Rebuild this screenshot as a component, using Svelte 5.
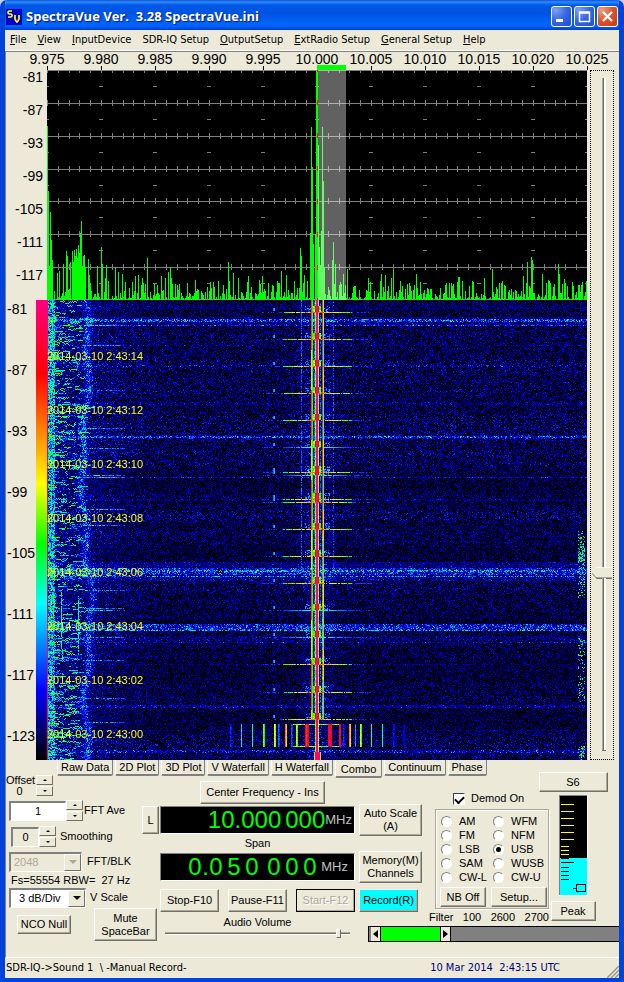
<script lang="ts">
  import { onMount } from "svelte";

  const menu = [
    ["F", "ile"],
    ["V", "iew"],
    ["I", "nputDevice"],
    ["", "SDR-IQ Setup"],
    ["O", "utputSetup"],
    ["E", "xtRadio Setup"],
    ["G", "eneral Setup"],
    ["H", "elp"],
  ];
  const frequencies = ["9.975", "9.980", "9.985", "9.990", "9.995", "10.000", "10.005", "10.010", "10.015", "10.020", "10.025"];
  const spectrumLevels = [-81, -87, -93, -99, -105, -111, -117];
  const waterfallLevels = [-81, -87, -93, -99, -105, -111, -117, -123];
  const stamps = ["14", "12", "10", "08", "06", "04", "02", "00"];
  const tabs = ["Raw Data", "2D Plot", "3D Plot", "V Waterfall", "H Waterfall", "Combo", "Continuum", "Phase"];
  const modes = ["AM", "WFM", "FM", "NFM", "LSB", "USB", "SAM", "WUSB", "CW-L", "CW-U"];

  let activeTab = $state("Combo");
  let mode = $state("USB");
  let demod = $state(true);
  let average = $state(1);
  let smoothing = $state(0);
  let offset = $state(0);
  let volume = $state(95);
  let level = $state(74);
  let canvas: HTMLCanvasElement;

  // Small seeded generator so the noise looks the same on every load
  function makeRandom(seed: number) {
    return () => {
      seed = (seed * 1664525 + 1013904223) >>> 0;
      return seed / 4294967296;
    };
  }

  // Signal peaks: [bin, height above the noise floor]
  const peaks = [
    [0, 174], [1, 109], [2, 34], [3, 88], [4, 60], [5, 40], [10, 27], [12, 29], [16, 36], [19, 49], [20, 44], [23, 38],
    [25, 49], [26, 38], [27, 50], [28, 44], [29, 51], [30, 42], [31, 55], [32, 47], [33, 67], [34, 79], [35, 34], [36, 44],
    [37, 45], [38, 33], [41, 41], [42, 25], [50, 34], [54, 53], [55, 36], [58, 22], [59, 35], [68, 33], [71, 28], [75, 26],
    [88, 24], [91, 25], [95, 22], [100, 42], [107, 16], [114, 24], [118, 22], [121, 28], [123, 33], [124, 22], [132, 16],
    [140, 17], [148, 20], [181, 38], [186, 27], [191, 22], [201, 24], [212, 20], [215, 24], [234, 29], [239, 25],
    [253, 52], [254, 44], [257, 25], [263, 67], [264, 173], [265, 133], [266, 56], [268, 66], [269, 230], [270, 230],
    [271, 155], [272, 53], [273, 35], [274, 69], [275, 173], [276, 119], [277, 33], [285, 40], [286, 58], [288, 36],
    [296, 26], [300, 31], [321, 22], [334, 26], [338, 25], [344, 22], [346, 30], [353, 19], [369, 26], [402, 17],
    [411, 23], [412, 23], [415, 19], [426, 18], [437, 22], [445, 31], [455, 19], [476, 24], [480, 38], [484, 43],
    [485, 40], [495, 26], [501, 20], [511, 36], [512, 26], [517, 21], [534, 15],
  ];

  function spectrumPath() {
    const random = makeRandom(11);
    const heights = Array.from({ length: 540 }, () => Math.round(random() ** 2.2 * 19));
    for (const [bin, height] of peaks) heights[bin] = height;
    return heights.map((h, i) => (h > 0 ? `M${i} ${230 - h}h1V230h-1z` : "")).join("");
  }

  function gridPath() {
    let d = "";
    for (let row = 0; row <= 7; row++) {
      const y = Math.round(row * 32.85);
      d += `M0 ${Math.min(y, 229)}h540v1h-540z`;
      for (let i = 0; i <= 50; i++) {
        d += `M${Math.round(i * 10.8)} ${y - 3}h1v6h-1z`;
      }
      for (let i = 0; i <= 10; i++) {
        d += `M${i * 54 - 2} ${y + 16}h4v1h-4z`;
      }
    }
    return d;
  }

  const palette = [
    [0, 0, 0, 0],
    [0.18, 0, 0, 255],
    [0.34, 0, 255, 255],
    [0.47, 0, 255, 0],
    [0.6, 255, 255, 0],
    [0.84, 255, 0, 0],
    [1, 255, 0, 128],
  ];

  function colour(value: number) {
    const v = Math.max(0, Math.min(1, value));
    let i = 1;
    while (i < palette.length - 1 && v > palette[i][0]) i++;
    const a = palette[i - 1];
    const b = palette[i];
    const t = (v - a[0]) / (b[0] - a[0]);
    return [1, 2, 3].map((c) => a[c] + (b[c] - a[c]) * t);
  }

  // Horizontal noise bursts: [first row, last row, strength]
  const bursts = [
    [4, 9, 0.05], [17, 24, 0.08], [19, 21, 0.2], [25, 25, 0.22], [45, 45, 0.09], [65, 66, 0.08], [102, 104, 0.06],
    [135, 138, 0.08], [136, 137, 0.16], [177, 177, 0.18], [199, 200, 0.08], [235, 236, 0.04], [262, 280, 0.1],
    [268, 274, 0.14], [270, 271, 0.14], [276, 276, 0.24], [324, 330, 0.24], [330, 330, 0.14], [336, 340, 0.06],
    [342, 342, 0.12], [364, 364, 0.08], [405, 407, 0.14], [430, 430, 0.06], [450, 452, 0.14],
  ];
  const ticks = [12, 39, 66, 93, 120, 147, 172, 175, 199, 202, 229, 256, 283, 310, 337, 364, 392, 419];
  const harmonics = [
    [183, 0.23], [194, 0.34], [205, 0.42], [216, 0.56], [227, 0.64], [231, 0.27], [238, 0.76], [244, 0.26], [249, 0.6],
    [258, 0.9], [260, 0.96], [281, 0.96], [283, 0.98], [292, 0.96], [296, 0.24], [302, 0.74], [308, 0.3], [313, 0.6],
    [324, 0.42], [335, 0.4], [346, 0.22], [356, 0.18],
  ];

  function drawWaterfall() {
    const width = 540;
    const height = 460;
    const random = makeRandom(77);
    const field = new Float32Array(width * height);
    const raise = (x: number, y: number, v: number) => {
      if (x < 0 || y < 0 || x >= width || y >= height) return;
      field[y * width + x] = Math.max(field[y * width + x], v);
    };

    let drift = 0.17;
    for (let y = 0; y < height; y++) {
      drift = Math.max(0.14, Math.min(0.22, drift + (random() - 0.5) * 0.04));
      const gain = bursts.reduce((sum, [from, to, s]) => (y >= from && y <= to ? sum + s : sum), 0);
      const ridge = 38 + 3 * Math.sin(y / 37) + 2 * Math.sin(y / 11) + (y > 270 ? 3 : 0);
      for (let x = 0; x < width; x++) {
        let v = random() ** 2.6 * drift + gain * random();
        if (x < 110) v += random() ** 2 * 0.13 * (1 - x / 110);
        v += random() * 0.24 * Math.exp(-(((x - ridge) / 4) ** 2));
        if (x < 8) v += random() * 0.34;
        const near = Math.abs(x - 270);
        if (near < 22) v += random() * 0.1 * (1 - near / 22);
        field[y * width + x] = v;
      }
    }

    // Broken streaks of interference on the low side
    for (let n = 0; n < 760; n++) {
      const y = Math.floor(random() * height);
      const x = Math.floor(random() ** 1.4 * 34);
      const length = 2 + Math.floor(random() ** 2 * 11);
      const strength = 0.2 + random() * 0.28;
      for (let i = 0; i < length; i++) raise(x + i, y + (random() < 0.25 ? 1 : 0), strength + (random() - 0.5) * 0.18);
    }
    for (const y of [25, 45, 90, 107, 128, 148, 175, 177, 209, 225, 290, 308, 310, 337, 360, 398, 422]) {
      for (let x = 36; x < 78; x++) if (random() < 0.75) raise(x, y, 0.2 + random() * 0.22 * (1 - (x - 36) / 60));
    }
    for (const [x, from, to] of [[5, 0, 40], [14, 292, 350], [15, 350, 362], [31, 295, 355], [4, 180, 220], [6, 290, 320]]) {
      for (let y = from; y < to; y++) if (random() < 0.8) raise(x, y, 0.3 + random() * 0.14);
    }

    // Noise patches on the high side
    for (const [from, to, density] of [[230, 298, 0.22], [246, 262, 0.35], [338, 402, 0.2], [446, 460, 0.35]]) {
      for (let y = from; y < to; y++) {
        for (let x = 531; x < 538; x++) if (random() < density) raise(x, y, 0.22 + random() * 0.3);
      }
    }

    for (let y = 0; y < 420; y++) {
      if (y < 270 && random() < 0.7) raise(254, y, 0.2 + random() * 0.08);
      if (y < 270 && random() < 0.6) raise(286, y, 0.19 + random() * 0.09);
      raise(264, y, y % 90 < 50 ? 0.78 : 0.64);
      raise(265, y, 0.46 + random() * 0.06);
      raise(275, y, y > 230 ? 0.66 + random() * 0.12 : 0.8);
      raise(276, y, y % 70 < 30 ? 0.56 : 0.36);
      raise(267, y, 0.16 + random() * 0.14);
      raise(273, y, 0.14 + random() * 0.14);
    }
    for (let y = 0; y < height; y++) {
      raise(268, y, 0.46 + random() * 0.14);
      for (const x of [269, 270]) raise(x, y, 1);
      raise(271, y, 0.5 + random() * 0.14);
    }

    for (const y of ticks) {
      const weak = y === 175 || y === 147 || y === 310 || y === 337;
      for (let x = 236; x < 305; x++) {
        const d = Math.abs(x - 270) / 34;
        if (random() < 0.88) raise(x, y, weak ? 0.4 - d * 0.2 : 0.7 - d * 0.3 + random() * 0.12);
      }
      for (let x = 215; x < 325; x++) if (random() < 0.4) raise(x, y, 0.22);
      for (let dy = -6; dy < 0; dy++) {
        for (let x = 266; x < 274; x++) raise(x, y + dy, x > 267 && x < 272 ? 0.84 : 0.4 + random() * 0.2);
        for (let x = 258; x < 283; x++) if (random() < 0.35) raise(x, y + dy, 0.2 + random() * 0.12);
      }
      for (let dy = -4; dy < -1; dy++) {
        raise(226, y + dy, 0.26);
        raise(227, y + dy, 0.3);
      }
    }

    for (let y = 424; y < 447; y++) {
      for (const [x, v] of harmonics) {
        raise(x, y, v - random() * 0.06);
        if (v > 0.5 || v < 0.3) raise(x + 1, y, v * 0.9 - random() * 0.06);
      }
    }
    for (let x = 246; x < 294; x++) {
      raise(x, 424, 0.4 + random() * 0.24);
      raise(x, 446, 0.4 + random() * 0.24);
    }
    for (let y = 452; y < height; y++) {
      for (let x = 267; x < 274; x++) raise(x, y, x === 267 || x === 273 ? 0.55 : 0.98);
    }
    for (let y = 0; y < height; y++) raise(0, y, 0.98);

    const context = canvas.getContext("2d")!;
    const image = context.createImageData(width, height);
    field.forEach((v, i) => {
      const [r, g, b] = colour(v);
      image.data.set([r, g, b, 255], i * 4);
    });
    context.putImageData(image, 0, 0);
  }

  onMount(drawWaterfall);
</script>

{#snippet spinner(label: string, step: (by: number) => void)}
  <span class="spinner">
    <button aria-label="Increase {label}" onclick={() => step(1)}><i class="up"></i></button>
    <button aria-label="Decrease {label}" onclick={() => step(-1)}><i class="down"></i></button>
  </span>
{/snippet}

<div class="window">
  <header class="titlebar">
    <svg class="logo" viewBox="0 0 16 16" aria-hidden="true">
      <rect width="16" height="16" fill="#0000c8" />
      <path d="M6 2H3L2 3v1l1 1h2l1 1v1L5 8H2M9 6v4l1 2 1 1 1-1 1-2V6" fill="none" stroke="#ff0" stroke-width="1.7" />
    </svg>
    <h1>SpectraVue Ver. &nbsp;3.28 SpectraVue.ini</h1>
    <button class="caption" aria-label="Minimize">
      <svg viewBox="0 0 19 19"><rect x="4" y="12" width="7" height="3" fill="#fff" /></svg>
    </button>
    <button class="caption" aria-label="Maximize">
      <svg viewBox="0 0 19 19"><path d="M4.500 5.500h10v9h-10zM4 5h11M4 6h11" fill="none" stroke="#fff" stroke-width="1.5" /></svg>
    </button>
    <button class="caption close" aria-label="Close">
      <svg viewBox="0 0 19 19"><path d="M5 5l9 9M14 5l-9 9" stroke="#fff" stroke-width="2.4" /></svg>
    </button>
  </header>

  <nav class="menu">
    {#each menu as [key, rest]}
      <button><u>{key}</u>{rest}</button>
    {/each}
  </nav>

  <main>
    <section class="display">
      <div class="freq-scale">
        {#each frequencies as frequency}
          <span>{frequency}</span>
        {/each}
        <div class="passband"></div>
      </div>

      <div class="spectrum-scale">
        {#each spectrumLevels as value}
          <span>{value}</span>
        {/each}
      </div>
      <svg class="spectrum" viewBox="0 0 540 230" preserveAspectRatio="none" shape-rendering="crispEdges">
        <rect width="540" height="230" fill="#000" />
        <path d={gridPath()} fill="#808080" />
        <path d={spectrumPath()} fill="#0f0" />
        <rect x="271" width="28" height="230" fill="#fff" opacity="0.38" />
        <path d="M270.5 0V230" stroke="#e02000" stroke-dasharray="5 28" stroke-dashoffset="3" />
      </svg>

      <div class="waterfall-scale">
        <div class="levels">
          {#each waterfallLevels as value}
            <span>{value}</span>
          {/each}
        </div>
        <div class="colorbar"></div>
      </div>
      <div class="waterfall">
        <canvas bind:this={canvas} width="540" height="460"></canvas>
        <div class="stamps">
          {#each stamps as seconds}
            <span>2014-03-10 2:43:{seconds}</span>
          {/each}
        </div>
      </div>

      <div class="level">
        <input type="range" min="0" max="100" bind:value={level} aria-label="Display level" />
      </div>
    </section>

    <div class="tabs" role="tablist">
      {#each tabs as tab}
        <button role="tab" aria-selected={activeTab === tab} class:active={activeTab === tab} onclick={() => (activeTab = tab)}>
          {tab}
        </button>
      {/each}
    </div>

    <section class="controls">
      <div class="left">
        <div class="row offset">
          <span class="offset-label">Offset<output>{offset}</output></span>
          {@render spinner("offset", (by) => (offset += by))}
        </div>
        <div class="row average">
          <input id="average" class="well" bind:value={average} />
          {@render spinner("FFT average", (by) => (average += by))}
          <label for="average">FFT Ave</label>
        </div>
        <div class="row smoothing">
          <input id="smoothing" class="well" bind:value={smoothing} />
          {@render spinner("smoothing", (by) => (smoothing += by))}
          <label for="smoothing">Smoothing</label>
        </div>
        <div class="row block">
          <span class="combo disabled">
            <select id="block" disabled><option>2048</option></select>
            <i class="arrow"></i>
          </span>
          <label for="block">FFT/BLK</label>
        </div>
        <p>Fs=55554 RBW= &nbsp;27 Hz</p>
        <div class="row scale">
          <span class="combo">
            <select id="scale"><option>3 dB/Div</option></select>
            <i class="arrow"></i>
          </span>
          <label for="scale">V Scale</label>
        </div>
        <div class="row bottom">
          <button class="btn null">NCO Null</button>
          <button class="btn mute">Mute<br />SpaceBar</button>
        </div>
      </div>

      <div class="tuning">
        <button class="btn center">Center Frequency - Ins</button>
        <div class="lcd-row">
          <button class="btn lock">L</button>
          <div class="lcd">
            <span>10.</span><span>000</span><span class="group">000</span><small>MHz</small>
          </div>
        </div>
        <div class="caption-text">Span</div>
        <div class="lcd wide">
          <b>0</b><b>.</b><b>0</b><b>5</b><b>0</b><b class="group">0</b><b>0</b><b>0</b><small>MHz</small>
        </div>
        <div class="transport">
          <button class="btn">Stop-F10</button>
          <button class="btn">Pause-F11</button>
          <button class="btn start" disabled>Start-F12</button>
        </div>
        <label class="volume">
          Audio Volume
          <input type="range" min="0" max="100" bind:value={volume} />
        </label>
      </div>

      <div class="right">
        <div class="right-top">
          <div class="actions">
            <button class="btn tall">Auto Scale<br />(A)</button>
            <button class="btn tall">Memory(M)<br />Channels</button>
            <button class="btn record">Record(R)</button>
          </div>

          <div class="demod">
            <label class="check"><input type="checkbox" bind:checked={demod} />Demod On</label>
            <div class="modes">
              {#each modes as name}
                <label><input type="radio" name="mode" value={name} bind:group={mode} />{name}</label>
              {/each}
              <div class="mode-buttons">
                <button class="btn">NB Off</button>
                <button class="btn">Setup...</button>
              </div>
            </div>
            <div class="filter-text"><span>Filter</span><span>100</span><span>2600</span><span>2700</span></div>
          </div>

          <div class="meter">
            <button class="btn signal">S6</button>
            <svg viewBox="0 0 29 101" shape-rendering="crispEdges">
              <path d="M0 0h29v101H0z" fill="#808080" />
              <path d="M28 0h1v101H0v-1h28z" fill="#fff" />
              <path d="M1 1h27v62H1z" fill="#000" />
              <path d="M1 63h27v37H1z" fill="#0ff" />
              <path d="M2 9.5h13M2 16.5h13M2 23.5h13M2 30.5h13M2 37.5h13M2 44.5h13M2 51.5h8M2 55.5h8M2 59.5h8" stroke="#ff0" />
              <path d="M2 63.5h8M2 67.5h13M2 72.5h8M2 76.5h8M2 80.5h8M2 84.5h8M17.5 89.5h9v7h-9zM14 93.5h3" stroke="#000" fill="none" />
            </svg>
            <button class="btn peak">Peak</button>
          </div>
        </div>
        <div class="filter-bar">
          <button aria-label="Lower filter edge"><i></i></button>
          <span class="band"></span>
          <button class="upper" aria-label="Upper filter edge"><i></i></button>
        </div>
      </div>
    </section>
  </main>

  <footer>
    <span>SDR-IQ-&gt;Sound 1 &nbsp;\ -Manual Record-</span>
    <time>10 Mar 2014 &nbsp;2:43:15 UTC</time>
    <svg class="grip" viewBox="0 0 12 12"><path d="M0 12L12 0M4 12l8-8M8 12l4-4" stroke="#9a988a" stroke-width="1.5" /></svg>
  </footer>
</div>

<style>
  :global(body) {
    background: #c4d2ee;
  }

  .window {
    box-sizing: border-box;
    display: flex;
    flex-direction: column;
    border: solid #0042dc;
    border-width: 0 5px 4px;
    border-radius: 7px 7px 0 0;
    overflow: hidden;
    background: #ece9d8;
    color: #000;
    font: 11px/13px "Liberation Sans", Arial, sans-serif;
    cursor: default;
  }

  .window :global(*) {
    box-sizing: border-box;
  }

  button,
  input,
  select {
    margin: 0;
    padding: 0;
    border: 0;
    border-radius: 0;
    color: inherit;
    font: inherit;
  }

  .titlebar {
    display: flex;
    align-items: center;
    gap: 2px;
    height: 30px;
    margin: 0 -5px;
    padding: 3px 6px 0;
    background: linear-gradient(#1450d0 0, #2a8cff 2px, #0058e6 5px, #0053e1 14px, #0062fa 22px, #0066ff 26px, #003cd0 30px);
  }

  .logo {
    width: 16px;
    height: 16px;
  }

  h1 {
    flex: 1;
    margin: 0 0 1px 2px;
    color: #fff;
    font: bold 13px/18px "Open Sans", "Noto Sans", sans-serif;
    text-shadow: 1px 1px 1px #0a1883;
    white-space: nowrap;
  }

  .caption {
    width: 21px;
    height: 21px;
    border: 1px solid #fff;
    border-radius: 3px;
    background: radial-gradient(circle at 20% 15%, #7da2f0, #3565e4 50%, #1d4ed6);
  }

  .caption svg {
    display: block;
  }

  .caption.close {
    background: radial-gradient(circle at 20% 15%, #f0a080, #e0502c 50%, #c83a10);
  }

  .menu {
    display: flex;
    gap: 11px;
    height: 21px;
    padding: 0 5px 1px;
    border-bottom: 1px solid #fff;
  }

  .menu button {
    background: none;
    font: 11px/16px "DejaVu Sans Condensed", "DejaVu Sans", sans-serif;
    white-space: nowrap;
  }

  main {
    display: flex;
    flex-direction: column;
    border: solid #808080;
    border-width: 1px 0 0 1px;
    border-bottom: 1px solid #fff;
  }

  .display {
    display: grid;
    grid-template-columns: 41px minmax(0, 1fr) 32px;
    grid-template-rows: 18px 230px 460px;
    font-size: 14px;
    line-height: 14px;
  }

  .freq-scale {
    position: relative;
    grid-column: 2;
    display: flex;
    margin: 0 -27px;
  }

  .freq-scale span {
    flex: 1;
    display: flex;
    flex-direction: column;
    align-items: center;
  }

  .freq-scale span::after {
    content: "";
    width: 1px;
    height: 4px;
    background: #000;
  }

  .passband {
    position: absolute;
    bottom: 0;
    left: 50%;
    width: 29px;
    height: 5px;
    background: #0f0;
  }

  .spectrum-scale {
    grid-column: 1;
    padding-right: 4px;
    text-align: right;
  }

  .spectrum-scale span {
    display: block;
    height: 33px;
  }

  .spectrum {
    display: block;
    width: 100%;
    height: 230px;
  }

  .waterfall-scale {
    grid-column: 1;
    display: flex;
  }

  .levels {
    display: grid;
    grid-template-rows: repeat(7, 2fr) 1fr;
    width: 30px;
    padding: 2px 0 0 1px;
  }

  .colorbar {
    flex: 1;
    background: linear-gradient(#ff0080, #f00 16%, #ff0 40%, #0f0 53%, #0ff 66%, #00f 85%, #000);
  }

  .waterfall {
    position: relative;
  }

  .waterfall canvas {
    display: block;
    width: 100%;
    height: 460px;
  }

  .stamps {
    position: absolute;
    top: 49px;
    left: 0;
    color: #ff0;
    font-size: 11px;
  }

  .stamps span {
    display: block;
    height: 54px;
  }

  .level {
    grid-area: 1 / 3 / 4 / 4;
    margin: 18px 5px 0 3px;
    border: 1px dotted #000;
    padding: 7px 0 9px;
  }

  .level input {
    appearance: none;
    display: block;
    width: 22px;
    height: 100%;
    background: linear-gradient(90deg, transparent 11px, #aca899 11px 12px, #716f64 12px 13px, #fff 13px 15px, transparent 15px);
    filter: drop-shadow(0 1px #716f64);
    writing-mode: vertical-lr;
  }

  .level input::-webkit-slider-thumb {
    appearance: none;
    width: 20px;
    height: 11px;
    background: linear-gradient(#fff 1px, #ece9d8 1px 10px, #aca899 10px);
    clip-path: polygon(0 50%, 5px 0, 100% 0, 100% 100%, 5px 100%);
  }

  .tabs {
    display: flex;
    align-items: flex-start;
    gap: 2px;
    height: 12px;
    padding-left: 51px;
  }

  .tabs button {
    height: 16px;
    padding: 0 3px;
    border: solid #808080;
    border-width: 0 1px 2px;
    border-left-color: #fff;
    border-radius: 0 0 2px 2px;
    background: #ece9d8;
    white-space: nowrap;
  }

  .tabs .active {
    height: 18px;
    padding: 3px 5px 0;
  }

  .controls {
    display: flex;
    height: 185px;
  }

  .btn {
    border: 1px solid;
    border-color: #fff #716f64 #716f64 #fff;
    box-shadow: inset -1px -1px #aca899;
    background: #ece9d8;
    white-space: nowrap;
  }

  .row {
    display: flex;
    align-items: center;
  }

  .left {
    flex: none;
    width: 136px;
    padding-left: 3px;
  }

  .offset {
    gap: 3px;
    height: 27px;
  }

  .offset-label {
    width: 27px;
    margin-left: -3px;
    line-height: 11px;
  }

  .offset output {
    display: block;
    text-align: center;
  }

  .spinner {
    display: flex;
    flex-direction: column;
    gap: 1px;
  }

  .spinner button {
    display: grid;
    place-items: center;
    width: 17px;
    height: 10px;
    border: 1px solid;
    border-color: #fff #716f64 #716f64 #fff;
    background: #ece9d8;
  }

  .up,
  .down {
    border: solid transparent;
    border-width: 0 2px 2px;
    border-bottom-color: #000;
  }

  .down {
    border-width: 2px 2px 0;
    border-top-color: #000;
  }

  .well {
    width: 57px;
    height: 20px;
    border: solid;
    border-width: 2px 1px 1px 2px;
    border-color: #808080 #fff #fff #808080;
    background: #fff;
    text-align: center;
  }

  .average {
    height: 23px;
  }

  .average label {
    margin-left: 1px;
  }

  .smoothing {
    height: 27px;
    padding: 2px 0 0 2px;
  }

  .smoothing .well {
    width: 28px;
    background: #ece9d8;
  }

  .smoothing label {
    margin-left: 4px;
  }

  .combo {
    position: relative;
    width: 73px;
    height: 20px;
    border: solid;
    border-width: 2px 1px 1px 2px;
    border-color: #808080 #fff #fff #808080;
    background: #fff;
  }

  .combo select {
    appearance: none;
    width: 100%;
    height: 100%;
    padding-left: 3px;
    background: none;
    opacity: 1;
  }

  .combo.disabled {
    background: #ece9d8;
    color: #aca899;
  }

  .arrow {
    position: absolute;
    top: 0;
    right: 0;
    display: grid;
    place-items: center;
    width: 17px;
    height: 17px;
    border: 1px solid;
    border-color: #fff #716f64 #716f64 #fff;
    background: #ece9d8;
    pointer-events: none;
  }

  .arrow::after {
    content: "";
    border: solid transparent;
    border-width: 4px 4px 0;
    border-top-color: #000;
  }

  .disabled .arrow::after {
    border-top-color: #aca899;
  }

  .block {
    gap: 5px;
    height: 25px;
  }

  .left p {
    margin: 0 0 0 2px;
    line-height: 13px;
    white-space: nowrap;
  }

  .scale {
    gap: 4px;
    height: 21px;
  }

  .scale .combo {
    width: 77px;
  }

  .scale select {
    padding-left: 8px;
  }

  .bottom {
    gap: 23px;
    width: 150px;
    padding-left: 8px;
  }

  .null {
    width: 54px;
    height: 19px;
  }

  .mute {
    width: 63px;
    height: 33px;
  }

  .tuning {
    flex: none;
    display: flex;
    flex-direction: column;
    width: 213px;
    padding: 9px 0 0 18px;
  }

  .center {
    align-self: center;
    width: 125px;
    height: 23px;
    margin: 0 0 2px 10px;
  }

  .lcd-row {
    display: flex;
    gap: 1px;
    margin-left: -18px;
  }

  .lock {
    width: 17px;
    height: 28px;
  }

  .lcd {
    flex: 1;
    display: flex;
    align-items: center;
    justify-content: flex-end;
    height: 28px;
    padding-right: 2px;
    border: 1px solid;
    border-color: #808080 #fff #fff #808080;
    background: #000;
    color: #0f0;
    font-size: 24px;
    line-height: 26px;
  }

  .lcd .group {
    margin-left: 4px;
  }

  .lcd small {
    color: #c0c0c0;
    font-size: 13px;
  }

  .lcd.wide {
    flex: none;
    padding-right: 6px;
  }

  .lcd b {
    width: 18px;
    font-weight: normal;
  }

  .lcd b:nth-child(2) {
    width: 7px;
    margin-left: -4px;
  }

  .caption-text {
    line-height: 19px;
    text-align: center;
  }

  .transport {
    display: flex;
    justify-content: space-between;
    margin-top: 8px;
  }

  .transport .btn {
    width: 59px;
    height: 23px;
  }

  .transport .start {
    border-color: #000;
    color: #aca899;
    text-shadow: 1px 1px #fff;
  }

  .volume {
    display: flex;
    flex-direction: column;
    align-items: center;
    padding: 4px 5px 0;
  }

  .volume input {
    appearance: none;
    width: 100%;
    height: 9px;
    background: linear-gradient(transparent 3px, #aca899 3px 4px, #716f64 4px 5px, #fff 5px 6px, transparent 6px);
  }

  .volume input::-webkit-slider-thumb {
    appearance: none;
    width: 5px;
    height: 9px;
    border: 1px solid;
    border-color: #fff #716f64 #716f64 #fff;
    background: #ece9d8;
  }

  .right {
    flex: 1;
    display: flex;
    flex-direction: column;
    padding-left: 4px;
  }

  .right-top {
    display: flex;
    justify-content: space-between;
    height: 154px;
    padding-right: 22px;
  }

  .actions {
    display: flex;
    flex-direction: column;
    width: 63px;
    padding-top: 32px;
  }

  .tall {
    height: 32px;
    margin-bottom: 15px;
  }

  .record {
    width: 59px;
    height: 23px;
    margin-top: -9px;
    background: #0ff;
  }

  .demod {
    display: flex;
    flex-direction: column;
    width: 127px;
    padding: 20px 0 0 13px;
  }

  .check {
    display: flex;
    align-items: center;
    gap: 6px;
    height: 13px;
    margin: 0 0 4px 18px;
  }

  .check input {
    appearance: none;
    width: 12px;
    height: 12px;
    border: 1px solid;
    border-color: #404040 #fff #fff #404040;
    background: #fff;
  }

  .check input:checked::after {
    content: "";
    display: block;
    width: 7px;
    height: 4px;
    margin: 2px 0 0 1px;
    border: solid #000;
    border-width: 0 0 2px 2px;
    transform: rotate(-45deg);
  }

  .modes {
    display: grid;
    grid-template-columns: 52px 1fr;
    grid-auto-rows: 14px;
    height: 100px;
    padding: 4px 0 0 5px;
    border: 1px solid #aca899;
    box-shadow: 1px 1px #fff, inset 1px 1px #fff;
  }

  .modes label {
    display: flex;
    align-items: center;
    gap: 7px;
    white-space: nowrap;
  }

  .modes input {
    appearance: none;
    display: grid;
    place-items: center;
    width: 11px;
    height: 11px;
    border: 1px solid;
    border-color: #808080 #fff #fff #808080;
    border-radius: 50%;
    background: #fff;
  }

  .modes input:checked::after {
    content: "";
    width: 5px;
    height: 5px;
    border-radius: 50%;
    background: #000;
  }

  .mode-buttons {
    grid-column: 1 / 3;
    display: flex;
    gap: 5px;
    margin: 3px 0 0 -1px;
  }

  .mode-buttons .btn {
    flex: none;
    width: 46px;
    height: 20px;
  }

  .mode-buttons .btn + .btn {
    width: 56px;
  }

  .filter-text {
    display: flex;
    justify-content: space-between;
    margin: 2px 0 0 -6px;
  }

  .meter {
    display: flex;
    flex-direction: column;
    align-items: center;
    width: 48px;
  }

  .meter svg {
    flex: none;
    width: 29px;
    height: 101px;
    margin: 3px 0 5px;
  }

  .signal {
    flex: none;
    width: 69px;
    height: 20px;
  }

  .peak {
    flex: none;
    width: 45px;
    height: 20px;
  }

  .filter-bar {
    display: flex;
    height: 16px;
    margin-left: 9px;
    padding-left: 2px;
    border: 1px solid #000;
    border-right: 0;
    background: #808080;
  }

  .filter-bar button {
    display: grid;
    place-items: center;
    width: 10px;
    border: solid #000;
    border-width: 0 1px 0 0;
    background: #ece9d8;
  }

  .filter-bar i {
    border: solid transparent;
    border-width: 4px 5px 4px 0;
    border-right-color: #000;
  }

  .filter-bar .upper i {
    border-width: 4px 0 4px 5px;
    border-left-color: #000;
  }

  .filter-bar .band {
    width: 60px;
    border-right: 1px solid #000;
    background: #0f0;
  }

  footer {
    display: flex;
    align-items: center;
    justify-content: space-between;
    height: 20px;
    padding-left: 1px;
    font: 11px/14px "DejaVu Sans Condensed", "DejaVu Sans", sans-serif;
    white-space: nowrap;
  }

  footer time {
    margin: 0 47px 0 auto;
    color: #000080;
  }

  .grip {
    width: 12px;
    height: 12px;
    align-self: flex-end;
  }
</style>
